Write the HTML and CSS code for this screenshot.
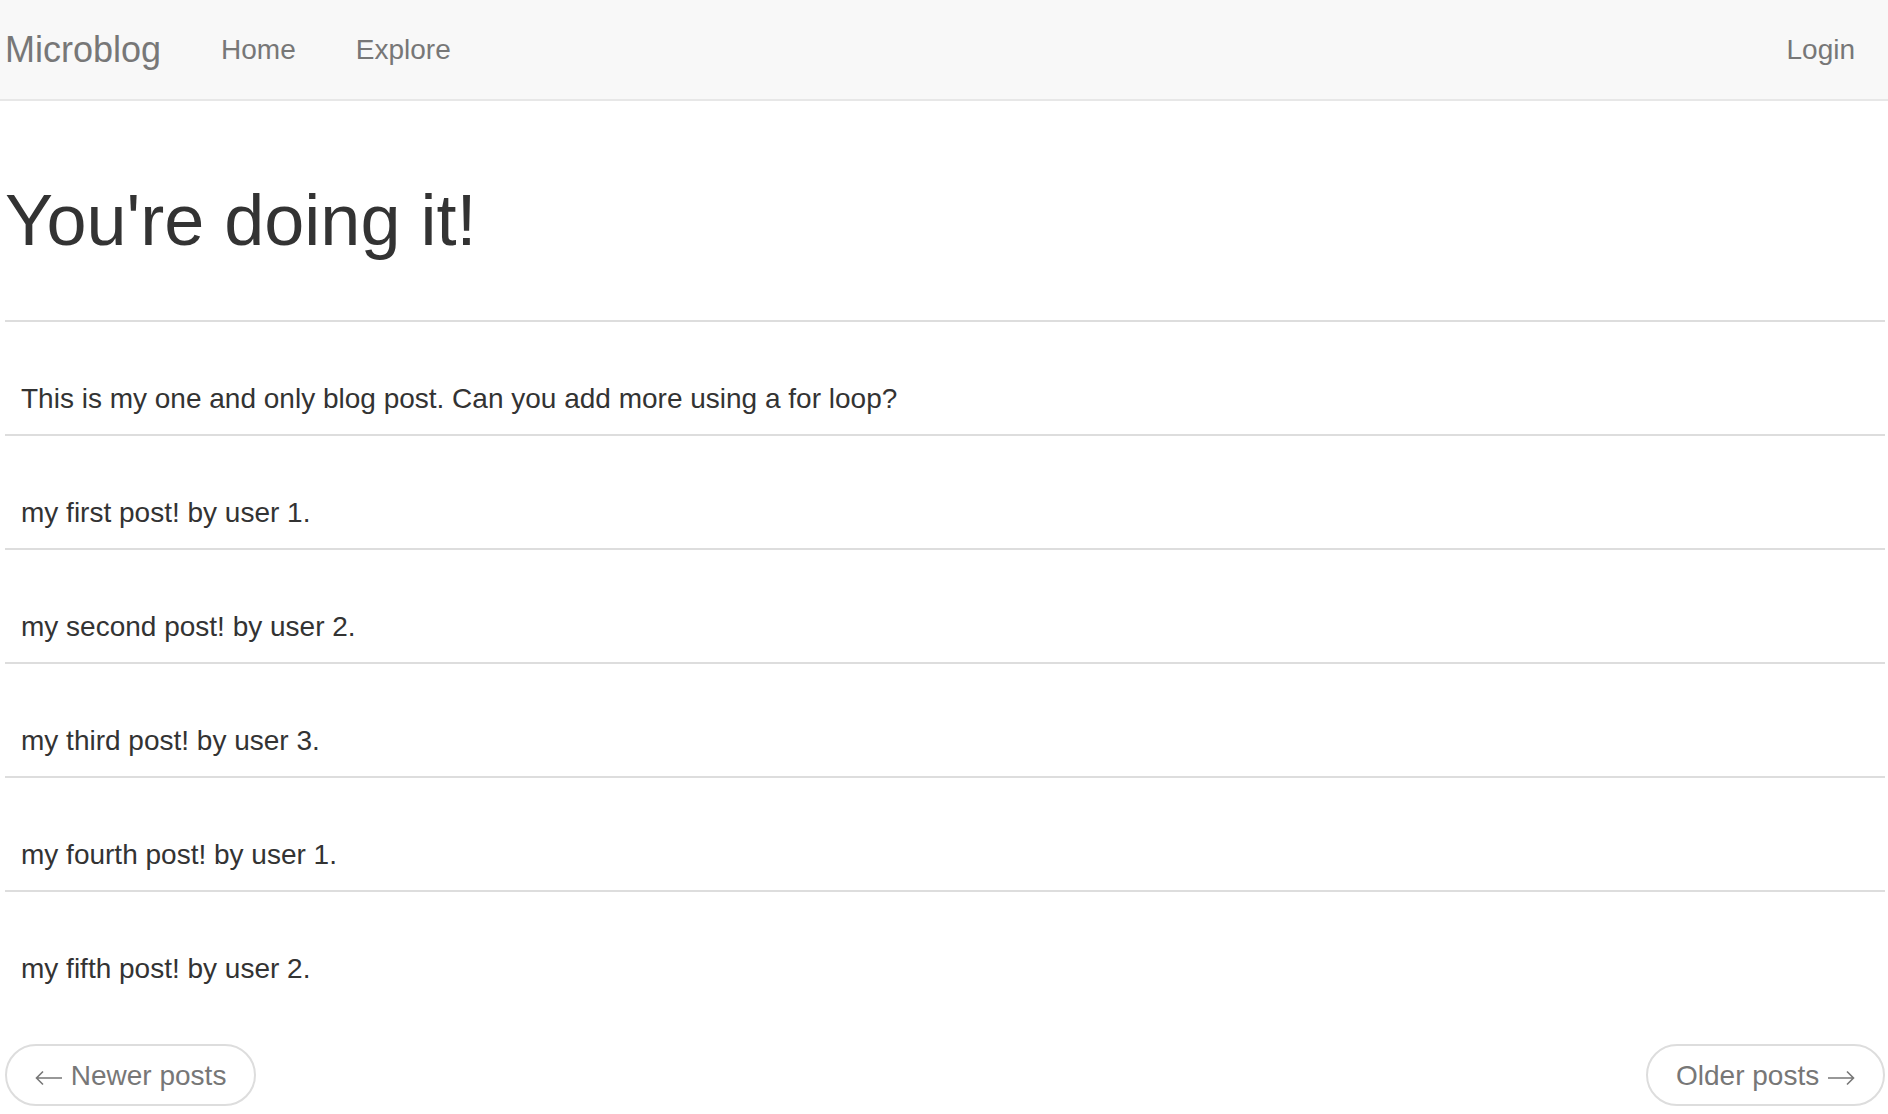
FILE: index.html
```html
<!DOCTYPE html>
<html lang="en">
<head>
<meta charset="utf-8">
<title>Microblog</title>
<link rel="stylesheet" href="styles.css">
</head>
<body>
<nav class="navbar">
  <div class="nav-inner">
    <a class="brand" href="#">Microblog</a>
    <ul class="nav">
      <li><a href="#">Home</a></li>
      <li><a href="#">Explore</a></li>
    </ul>
    <ul class="nav nav-right">
      <li><a href="#">Login</a></li>
    </ul>
  </div>
</nav>
<main class="container">
  <h1 class="title">You're doing it!</h1>
  <table class="posts">
    <tr><td class="post-cell">This is my one and only blog post. Can you add more using a for loop?</td></tr>
    <tr><td class="post-cell">my first post! by user 1.</td></tr>
    <tr><td class="post-cell">my second post! by user 2.</td></tr>
    <tr><td class="post-cell">my third post! by user 3.</td></tr>
    <tr><td class="post-cell">my fourth post! by user 1.</td></tr>
    <tr><td class="post-cell">my fifth post! by user 2.</td></tr>
  </table>
  <ul class="pager">
    <li><a class="pager-link" href="#"><svg class="arrow" width="28" height="16" viewBox="0 0 28 16" aria-hidden="true"><path d="M1.5 8H27M8 1.5L1.5 8L8 14.5" fill="none" stroke="currentColor" stroke-width="1.6"/></svg> Newer posts</a></li>
    <li><a class="pager-link" href="#">Older posts <svg class="arrow" width="28" height="16" viewBox="0 0 28 16" aria-hidden="true"><path d="M1 8H26.5M20 1.5L26.5 8L20 14.5" fill="none" stroke="currentColor" stroke-width="1.6"/></svg></a></li>
  </ul>
</main>
</body>
</html>
```
FILE: styles.css
```css
html, body {
  margin: 0;
  padding: 0;
}
body {
  font-family: "Liberation Sans", Arial, sans-serif;
  font-size: 28px;
  line-height: 40px;
  color: #333333;
  background: #ffffff;
}
a {
  text-decoration: none;
}
.navbar {
  height: 99px;
  background: #f8f8f8;
  border-bottom: 2px solid #e7e7e7;
}
.nav-inner {
  display: flex;
  align-items: flex-start;
  padding: 30px 3px 0 5px;
}
.brand {
  font-size: 36px;
  line-height: 40px;
  color: #777777;
  padding-right: 30px;
}
.nav {
  list-style: none;
  margin: 0;
  padding: 0;
  display: flex;
}
.nav a {
  display: block;
  padding: 0 30px;
  font-size: 28px;
  line-height: 40px;
  color: #777777;
}
.nav-right {
  margin-left: auto;
}
.container {
  padding: 80px 3px 0 5px;
}
.title {
  font-size: 72px;
  line-height: 1.1;
  font-weight: 500;
  margin: 0 0 60px 0;
  color: #333333;
}
.posts {
  width: 100%;
  border-collapse: collapse;
  border-spacing: 0;
}
.post-cell {
  padding: 57px 16px 15px 16px;
  border-top: 2px solid #dddddd;
  line-height: 40px;
  vertical-align: top;
}
.pager {
  list-style: none;
  margin: 40px 0 0 0;
  padding: 0;
  display: flex;
  justify-content: space-between;
}
.pager-link {
  display: inline-block;
  padding: 10px 28px 8px 28px;
  border: 2px solid #dddddd;
  border-radius: 32px;
  color: #777777;
  font-size: 28px;
  line-height: 40px;
  background: #ffffff;
}
.arrow {
  display: inline-block;
  vertical-align: -1px;
}
```
